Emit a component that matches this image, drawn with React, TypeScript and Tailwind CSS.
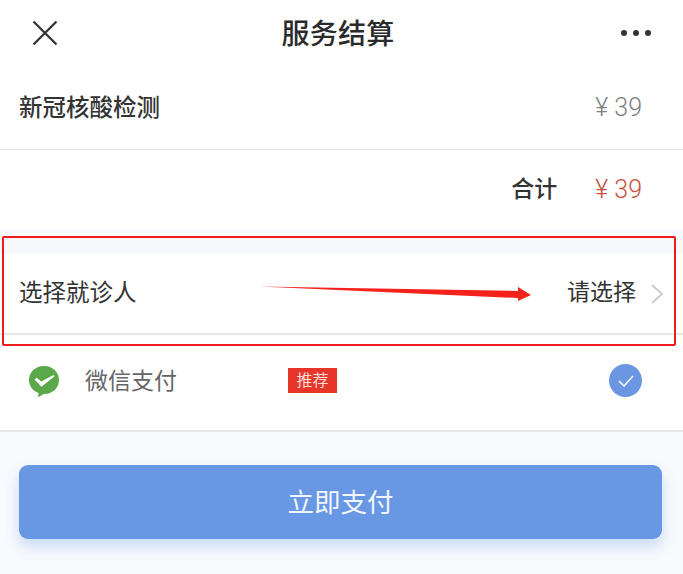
const FONT = "font-['Roboto','Noto_Sans_CJK_SC',sans-serif]";

function WechatIcon() {
  return (
    <svg width="34" height="34" viewBox="0 0 34 34">
      <path d="M17 2C8.300 2 2 8.300 2 16c0 6 3.800 11 9.500 13 .2 1.200-.2 2.600-1 3.800 2.300-.3 4.500-1.400 6-2.800 .2 0 .4 0 .5 0 8.700 0 15-6.300 15-14S25.700 2 17 2z" fill="#5ba84a" />
      <path d="M7.500 15.500l2.300-1.700 4.400 3.800L26.500 11l1 1.200-13 10.500z" fill="#fff" />
    </svg>
  );
}

export default function App() {
  return (
    <div className={`relative h-[574px] w-[683px] overflow-hidden bg-white ${FONT}`}>
      <header className="grid h-[66px] grid-cols-[1fr_auto_1fr] items-center pl-[25px] pr-[32px]">
        <svg width="26" height="26" viewBox="0 0 26 26" fill="none" className="ml-[7px]">
          <path d="M1.500 1.500l23 23M24.500 1.500l-23 23" stroke="#333" strokeWidth="2.300" />
        </svg>
        <h1 className="pt-[3px] text-[28px] font-medium leading-none tracking-[0.3px] text-[#2b2b2b]">服务结算</h1>
        <div className="flex justify-end gap-[6px]">
          <span className="h-[6px] w-[6px] rounded-full bg-[#333]" />
          <span className="h-[6px] w-[6px] rounded-full bg-[#333]" />
          <span className="h-[6px] w-[6px] rounded-full bg-[#333]" />
        </div>
      </header>

      <div className="flex h-[84px] items-center justify-between border-b border-[#e4e6ea] pb-[1px] pl-[19px] pr-[41px]">
        <span className="pt-[3px] text-[23.500px] font-medium text-[#333]">新冠核酸检测</span>
        <span className="pt-[2px] text-[25px] font-light text-[#808080]">¥ 39</span>
      </div>

      <div className="flex h-[80px] items-center justify-end gap-[38px] pr-[41px]">
        <span className="text-[23px] font-medium text-[#333]">合计</span>
        <span className="text-[25px] font-light text-[#c4523e]">¥ 39</span>
      </div>

      <div className="h-[24px] bg-[#f6f8fb]" />

      <div className="flex h-[81px] items-center justify-between border-b-2 border-[#e8e8e8] pl-[19px] pr-[19px]">
        <span className="text-[23.500px] text-[#333]">选择就诊人</span>
        <div className="flex items-center gap-[14px]">
          <span className="text-[23px] text-[#333]">请选择</span>
          <svg width="14" height="22" viewBox="0 0 14 22" fill="none">
            <path d="M2 2l10 9-10 9" stroke="#c9c9c9" strokeWidth="1.800" />
          </svg>
        </div>
      </div>

      <div className="flex h-[97px] items-center border-b-2 border-[#e8e8e8] pb-[4px] pl-[27px] pr-[41px]">
        <WechatIcon />
        <span className="ml-[24px] w-[203px] pt-[4px] text-[23px] text-[#666]">微信支付</span>
        <span className="flex h-[25px] w-[49px] items-center justify-center bg-[#e8352a] text-[16px] text-[#fbdcd8]">推荐</span>
        <span className="ml-auto flex h-[33px] w-[33px] items-center justify-center rounded-full bg-[#6a96e2]">
          <svg width="18" height="14" viewBox="0 0 18 14" fill="none">
            <path d="M2 7l5 5 9-10" stroke="#fff" strokeWidth="1.500" />
          </svg>
        </span>
      </div>

      <div className="h-[142px] bg-[#f8fafd] px-[19px] pt-[33px]">
        <button className="flex h-[74px] w-[643px] items-center justify-center rounded-[9px] bg-[#6897e4] pt-[2px] text-[26.500px] text-[#f2f5fb] shadow-[0_8px_14px_rgba(104,151,228,0.3)]">
          立即支付
        </button>
      </div>

      {/* annotation drawn over the screenshot */}
      <div className="absolute left-[2px] top-[236px] h-[110px] w-[674px] rounded-[2px] border-[2.500px] border-[#ee1c1c]" />
      <svg className="absolute left-0 top-0" width="683" height="574" viewBox="0 0 683 574">
        <path d="M260 286.500L518 291v-4l13 8-13 6v-3z" fill="#f5221c" />
      </svg>
    </div>
  );
}
